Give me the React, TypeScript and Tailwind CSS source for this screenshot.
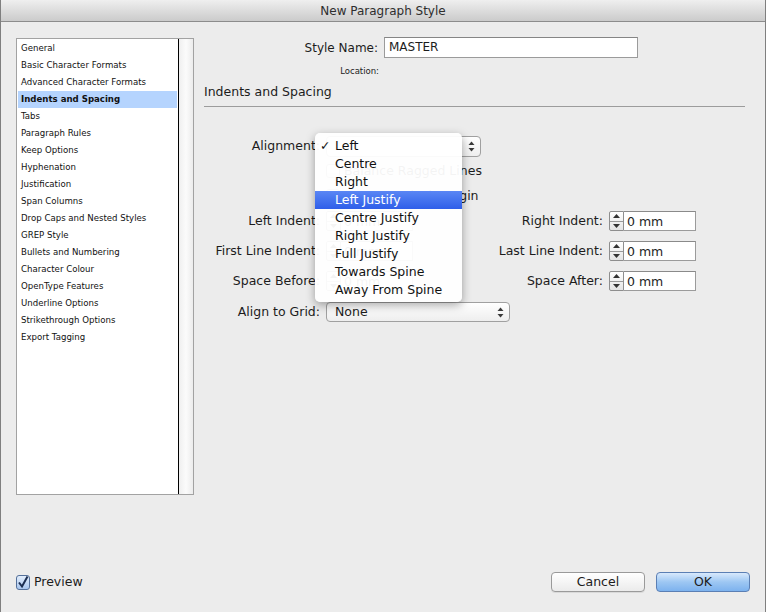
import React from 'react';

const sections = [
  'General',
  'Basic Character Formats',
  'Advanced Character Formats',
  'Indents and Spacing',
  'Tabs',
  'Paragraph Rules',
  'Keep Options',
  'Hyphenation',
  'Justification',
  'Span Columns',
  'Drop Caps and Nested Styles',
  'GREP Style',
  'Bullets and Numbering',
  'Character Colour',
  'OpenType Features',
  'Underline Options',
  'Strikethrough Options',
  'Export Tagging',
];

const alignments = [
  'Left',
  'Centre',
  'Right',
  'Left Justify',
  'Centre Justify',
  'Right Justify',
  'Full Justify',
  'Towards Spine',
  'Away From Spine',
];

function UpDown() {
  return (
    <svg width="7" height="11" viewBox="0 0 7 11" className="shrink-0">
      <path d="M3.5 0.5 L6.5 4 L0.5 4 Z" fill="#3a3a3a" />
      <path d="M3.5 10.5 L6.5 7 L0.5 7 Z" fill="#3a3a3a" />
    </svg>
  );
}

function Spinner() {
  return (
    <div className="w-[15px] h-[20px] border border-[#8e8e8e] bg-gradient-to-b from-white to-[#e4e4e4] flex flex-col rounded-l-[2px]">
      <div className="flex-1 flex items-center justify-center border-b border-[#9a9a9a]">
        <svg width="7" height="4" viewBox="0 0 7 4">
          <path d="M3.5 0 L7 4 L0 4 Z" fill="#333" />
        </svg>
      </div>
      <div className="flex-1 flex items-center justify-center">
        <svg width="7" height="4" viewBox="0 0 7 4">
          <path d="M3.5 4 L7 0 L0 0 Z" fill="#333" />
        </svg>
      </div>
    </div>
  );
}

function NumField({ value }: { value: string }) {
  return (
    <div className="flex items-center">
      <Spinner />
      <div className="w-[72px] h-[20px] border border-l-0 border-[#9b9b9b] border-t-[#8a8a8a] bg-white pl-[3px] leading-[19px] text-[12.5px]">
        {value}
      </div>
    </div>
  );
}

function Checkbox({ label }: { label: string }) {
  return (
    <div className="flex items-center h-[16px] pl-[122px]">
      <div className="w-[14px] h-[14px] rounded-[3px] border border-[#8e8e8e] bg-gradient-to-b from-white to-[#e6e6e6]" />
      <span className="ml-[4px] text-[12.5px] leading-[16px]">{label}</span>
    </div>
  );
}

export default function App() {
  return (
    <div
      className="relative w-[766px] h-[612px] overflow-hidden bg-[#ececec] border-x border-[#7f7f7f] flex flex-col text-[#1c1c1c]"
      style={{ fontFamily: '"DejaVu Sans", "Liberation Sans", sans-serif' }}
    >
      {/* title bar */}
      <div className="h-[22px] shrink-0 bg-gradient-to-b from-[#efefef] to-[#cbcbcb] border-b border-[#8c8c8c] flex items-center justify-center text-[12px] text-[#2e2e2e]">
        New Paragraph Style
      </div>

      <div className="flex-1 flex pt-[15px] pl-[15px]">
        {/* section list */}
        <div className="mt-px w-[178px] h-[457px] border border-[#a2a2a2] flex bg-white">
          <div className="w-[161px] pt-px">
            {sections.map((s) => (
              <div
                key={s}
                className={
                  s === 'Indents and Spacing'
                    ? 'h-[17px] leading-[17px] mx-px pl-[3px] text-[8.6px] font-bold bg-[#b5d4fe] text-[#111]'
                    : 'h-[17px] leading-[17px] pl-[4px] text-[8.6px] text-[#111]'
                }
              >
                {s}
              </div>
            ))}
          </div>
          <div className="w-px bg-black" />
          <div className="w-[14px] bg-gradient-to-r from-[#efefef] via-[#fbfbfb] to-[#ececec]" />
        </div>

        {/* right pane */}
        <div className="ml-[10px] w-[541px] flex flex-col">
          <div className="flex items-center h-[21px]">
            <div className="w-[180px] text-right pr-[6px] text-[12px]">Style Name:</div>
            <div className="w-[254px] h-[21px] border border-[#9b9b9b] border-t-[#858585] bg-white pl-[4px] leading-[19px] text-[12px]">
              MASTER
            </div>
          </div>
          <div className="mt-[8px] h-[10px] w-[180px] text-right pr-[5px] text-[8.5px] leading-[10px]">Location:</div>
          <div className="mt-[8px] h-[15px] leading-[15px] text-[12.5px]">Indents and Spacing</div>
          <div className="mt-[7px] h-px bg-[#9c9c9c]" />

          {/* Alignment */}
          <div className="mt-[29px] flex items-center h-[21px]">
            <div className="w-[116px] text-right text-[12.5px]">Alignment:</div>
            <div className="ml-[6px] w-[155px] h-[21px] rounded-[4px] border border-[#a0a0a0] bg-gradient-to-b from-white to-[#eeeeee] flex items-center justify-end pr-[5px]">
              <UpDown />
            </div>
          </div>

          <div className="mt-[6px]">
            <Checkbox label="Balance Ragged Lines" />
          </div>
          <div className="mt-[9px]">
            <Checkbox label="Ignore Optical Margin" />
          </div>

          {[
            ['Left Indent:', 'Right Indent:'],
            ['First Line Indent:', 'Last Line Indent:'],
            ['Space Before:', 'Space After:'],
          ].map(([l, r], i) => (
            <div key={l} className={`${i === 0 ? 'mt-[7px]' : 'mt-[10px]'} flex items-center h-[20px]`}>
              <div className="w-[116px] text-right text-[12.5px] whitespace-nowrap">{l}</div>
              <div className="ml-[6px]">
                <NumField value="0 mm" />
              </div>
              <div className="w-[190px] text-right text-[12.5px] whitespace-nowrap">{r}</div>
              <div className="ml-[6px]">
                <NumField value="0 mm" />
              </div>
            </div>
          ))}

          {/* Align to Grid */}
          <div className="mt-[11px] flex items-center h-[20px]">
            <div className="w-[116px] text-right text-[12.5px]">Align to Grid:</div>
            <div className="ml-[6px] w-[184px] h-[20px] rounded-[4px] border border-[#a0a0a0] bg-gradient-to-b from-white to-[#eeeeee] flex items-center justify-between pl-[8px] pr-[5px] text-[12.5px]">
              <span>None</span>
              <UpDown />
            </div>
          </div>
        </div>
      </div>

      {/* bottom bar */}
      <div className="h-[20px] mb-[20px] shrink-0 flex items-center justify-between pl-[15px] pr-[15px]">
        <div className="flex items-center">
          <div className="w-[14px] h-[15px] rounded-[3px] border border-[#54709a] bg-gradient-to-b from-[#e3eefc] to-[#a8c6ee] flex items-center justify-center">
            <svg width="12" height="13" viewBox="0 0 12 13">
              <path d="M2 6.5 L5 10.5 L10.5 0.5" fill="none" stroke="#1d2f52" strokeWidth="2" />
            </svg>
          </div>
          <span className="ml-[4px] text-[12.5px]">Preview</span>
        </div>
        <div className="flex gap-[11px]">
          <div className="w-[94px] h-[20px] rounded-[4px] border border-[#9a9a9a] bg-gradient-to-b from-white to-[#ebebeb] flex items-center justify-center text-[12.5px] shadow-[0_1px_0_rgba(0,0,0,0.08)]">
            Cancel
          </div>
          <div className="w-[94px] h-[20px] rounded-[4px] border border-[#5b7fb4] bg-gradient-to-b from-[#d8e9fc] via-[#9dc7f3] to-[#7db2ee] flex items-center justify-center text-[12.5px]">
            OK
          </div>
        </div>
      </div>

      {/* open alignment menu */}
      <div className="absolute left-[314px] top-[133px] w-[147px] rounded-[5px] bg-white/95 shadow-[0_3px_10px_rgba(0,0,0,0.35)] pt-[4px] pb-[3px]">
        {alignments.map((a) => (
          <div
            key={a}
            className={
              a === 'Left Justify'
                ? 'relative h-[18px] leading-[18px] pl-[20px] text-[12.5px] text-white bg-gradient-to-b from-[#5a86f4] to-[#2f5ee9]'
                : 'relative h-[18px] leading-[18px] pl-[20px] text-[12.5px] text-[#111]'
            }
          >
            {a === 'Left' && <span className="absolute left-[5px] top-0">✓</span>}
            {a}
          </div>
        ))}
      </div>
    </div>
  );
}
